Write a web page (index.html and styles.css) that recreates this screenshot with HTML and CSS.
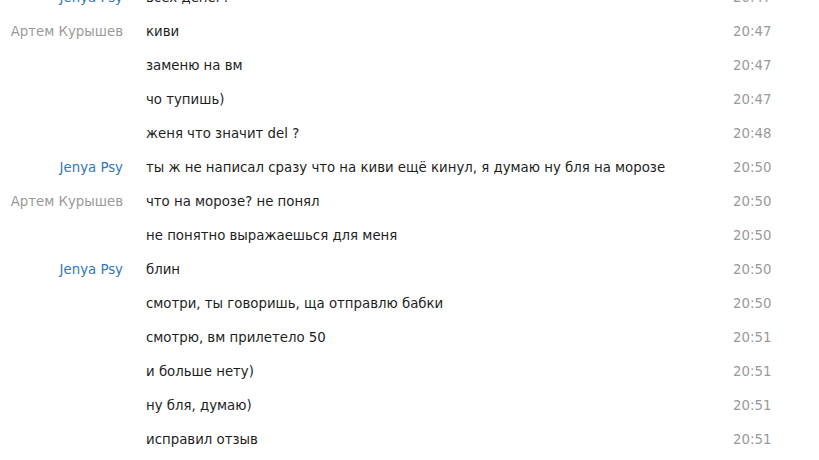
FILE: index.html
```html
<!DOCTYPE html>
<html>
<head>
<meta charset="utf-8">
<link rel="stylesheet" href="styles.css">
</head>
<body>
<div class="log">
  <div class="row"><span class="name blue">Jenya Psy</span><span class="msg">всех денег?</span><span class="time">20:47</span></div>
  <div class="row"><span class="name grey">Артем Курышев</span><span class="msg">киви</span><span class="time">20:47</span></div>
  <div class="row"><span class="name"></span><span class="msg">заменю на вм</span><span class="time">20:47</span></div>
  <div class="row"><span class="name"></span><span class="msg">чо тупишь)</span><span class="time">20:47</span></div>
  <div class="row"><span class="name"></span><span class="msg">женя что значит del ?</span><span class="time">20:48</span></div>
  <div class="row"><span class="name blue">Jenya Psy</span><span class="msg">ты ж не написал сразу что на киви ещё кинул, я думаю ну бля на морозе</span><span class="time">20:50</span></div>
  <div class="row"><span class="name grey">Артем Курышев</span><span class="msg">что на морозе? не понял</span><span class="time">20:50</span></div>
  <div class="row"><span class="name"></span><span class="msg">не понятно выражаешься для меня</span><span class="time">20:50</span></div>
  <div class="row"><span class="name blue">Jenya Psy</span><span class="msg">блин</span><span class="time">20:50</span></div>
  <div class="row"><span class="name"></span><span class="msg">смотри, ты говоришь, ща отправлю бабки</span><span class="time">20:50</span></div>
  <div class="row"><span class="name"></span><span class="msg">смотрю, вм прилетело 50</span><span class="time">20:51</span></div>
  <div class="row"><span class="name"></span><span class="msg">и больше нету)</span><span class="time">20:51</span></div>
  <div class="row"><span class="name"></span><span class="msg">ну бля, думаю)</span><span class="time">20:51</span></div>
  <div class="row"><span class="name"></span><span class="msg">исправил отзыв</span><span class="time">20:51</span></div>
</div>
</body>
</html>
```
FILE: styles.css
```css
html, body {
  margin: 0;
  padding: 0;
  background: #ffffff;
  overflow: hidden;
}
body {
  font-family: "DejaVu Sans Condensed", "DejaVu Sans", sans-serif;
  font-size: 14.8px;
  color: #222222;
}
.log {
  margin-top: -20px;
  width: 819px;
}
.row {
  display: grid;
  grid-template-columns: 123px 1fr 86px;
  column-gap: 0;
  height: 34px;
  line-height: 34px;
  white-space: nowrap;
}
.name {
  text-align: right;
}
.blue {
  color: #2f78bd;
}
.grey {
  color: #9a9a9a;
}
.msg {
  padding-left: 23px;
  color: #1e1e1e;
}
.time {
  color: #9a9a9a;
}
```
